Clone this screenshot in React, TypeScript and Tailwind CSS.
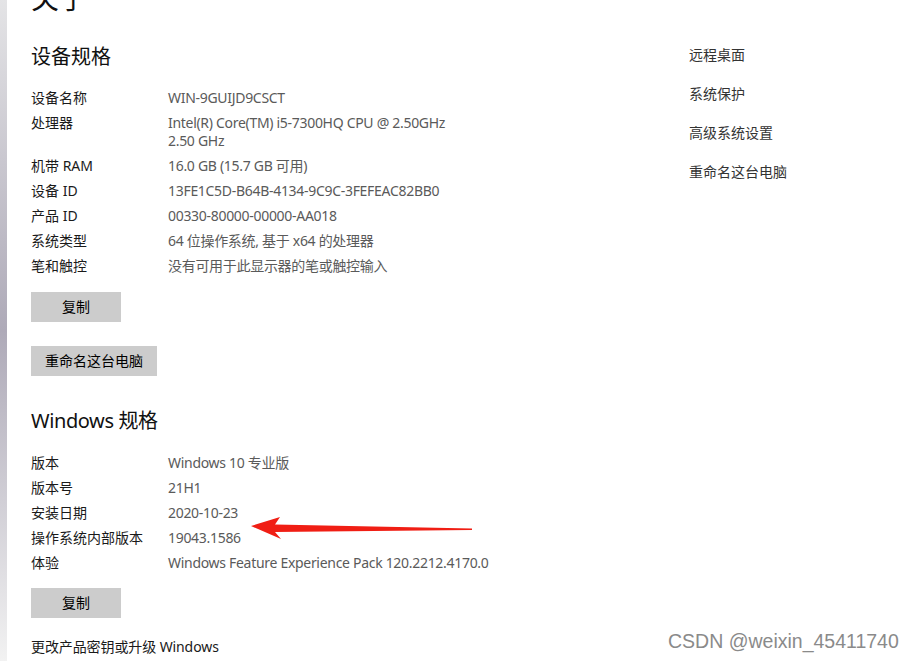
const FONT = "font-['Noto_Sans','Noto_Sans_CJK_SC',sans-serif]";

type Row = { label: string; value: string[] };

const DEVICE: Row[] = [
  { label: "设备名称", value: ["WIN-9GUIJD9CSCT"] },
  { label: "处理器", value: ["Intel(R) Core(TM) i5-7300HQ CPU @ 2.50GHz", "2.50 GHz"] },
  { label: "机带 RAM", value: ["16.0 GB (15.7 GB 可用)"] },
  { label: "设备 ID", value: ["13FE1C5D-B64B-4134-9C9C-3FEFEAC82BB0"] },
  { label: "产品 ID", value: ["00330-80000-00000-AA018"] },
  { label: "系统类型", value: ["64 位操作系统, 基于 x64 的处理器"] },
  { label: "笔和触控", value: ["没有可用于此显示器的笔或触控输入"] },
];

const WINDOWS: Row[] = [
  { label: "版本", value: ["Windows 10 专业版"] },
  { label: "版本号", value: ["21H1"] },
  { label: "安装日期", value: ["2020-10-23"] },
  { label: "操作系统内部版本", value: ["19043.1586"] },
  { label: "体验", value: ["Windows Feature Experience Pack 120.2212.4170.0"] },
];

const LINKS = ["远程桌面", "系统保护", "高级系统设置", "重命名这台电脑"];

const SpecTable = ({ rows }: { rows: Row[] }) => (
  <div className="flex flex-col">
    {rows.map((row) => (
      <div key={row.label} className="flex py-[3.5px] text-[14px] leading-[18px]">
        <span className="w-[137px] shrink-0 text-[#1a1a1a]">{row.label}</span>
        <div className="flex flex-col tracking-[-0.3px] text-[#5a5a5a]">
          {row.value.map((v) => (
            <span key={v}>{v}</span>
          ))}
        </div>
      </div>
    ))}
  </div>
);

const GrayButton = ({ children, className }: { children: string; className?: string }) => (
  <button
    className={`h-[30px] bg-[#cccccc] px-[14px] text-[14px] leading-[18px] text-black ${className ?? ""}`}
  >
    {children}
  </button>
);

export default function App() {
  return (
    <div className={`relative flex h-[661px] w-[915px] overflow-hidden bg-white ${FONT}`}>
      <div className="w-[7px] shrink-0 bg-gradient-to-b from-[#e4e4e6] via-[#aeaab8] to-[#f2f2f2]" />

      <main className="flex w-[658px] shrink-0 flex-col items-start pl-[24px]">
        <h1 className="mt-[-22px] text-[28px] leading-[40px] text-[#111]">关于</h1>

        <h2 className="mt-[25px] text-[20px] leading-[28px] text-[#111]">设备规格</h2>
        <div className="mt-[14.5px]">
          <SpecTable rows={DEVICE} />
        </div>

        <GrayButton className="mt-[13.5px] w-[90px]">复制</GrayButton>
        <GrayButton className="mt-[24px] w-[126px]">重命名这台电脑</GrayButton>

        <h2 className="mt-[31px] text-[20px] leading-[28px] tracking-[-0.4px] text-[#111]">Windows 规格</h2>
        <div className="mt-[15.5px]">
          <SpecTable rows={WINDOWS} />
        </div>

        <GrayButton className="mt-[12.5px] w-[90px]">复制</GrayButton>

        <a className="mt-[20px] text-[14px] leading-[18px] tracking-[-0.1px] text-[#1a1a1a]">更改产品密钥或升级 Windows</a>
      </main>

      <aside className="flex flex-col gap-[21px] pl-[24px] pt-[46px]">
        {LINKS.map((l) => (
          <a key={l} className="text-[14px] leading-[18px] text-[#333]">
            {l}
          </a>
        ))}
      </aside>

      {/* red annotation arrow */}
      <svg className="absolute left-[248px] top-[515px]" width="228" height="26" viewBox="0 0 228 26">
        <path d="M3 11 L32 2 L27 9.5 L224 13.5 L224 15 L27 17 L33 24 Z" fill="#f01e14" />
      </svg>

      <span className="absolute left-[668px] top-[628px] text-[19.5px] leading-[26px] text-[#8a8a8a] [text-shadow:0_0_2px_#fff] font-['Liberation_Sans',sans-serif]">
        CSDN @weixin_45411740
      </span>
    </div>
  );
}
